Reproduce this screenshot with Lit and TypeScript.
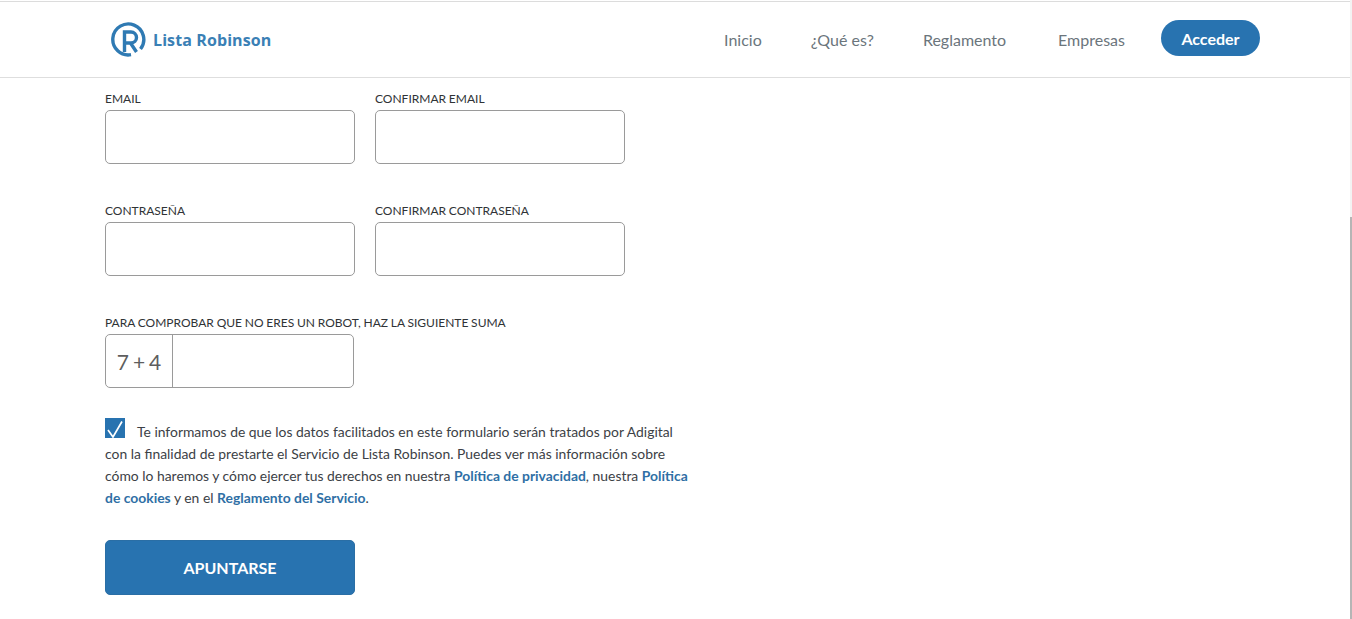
import { LitElement, html, css } from "lit";
import { customElement } from "lit/decorators.js";

@customElement("app-root")
export class AppRoot extends LitElement {
  static styles = css`
    :host { display: block; position: relative; width: 1352px; height: 619px; overflow: hidden; background: #fff; font-family: Lato, "Liberation Sans", sans-serif; color: #333; }
    * { box-sizing: border-box; }
    .header { height: 77px; margin-top: 1px; border-top: 1px solid #dcdcdc; border-bottom: 1px solid #dedede; display: flex; align-items: center; padding: 0 92px 0 111px; }
    .logo { display: flex; align-items: center; gap: 6px; }
    .logo svg { display: block; }
    .logo span { font-family: "Open Sans", sans-serif; font-weight: 700; font-size: 16px; letter-spacing: 0.1px; color: #3a80b5; }
    nav { margin-left: auto; display: flex; align-items: center; }
    nav a { font-size: 16px; color: #6b757c; }
    .n1 { margin-right: 49px; }
    .n2 { margin-right: 49px; }
    .n3 { margin-right: 52px; }
    .n4 { margin-right: 36px; }
    .btn { width: 99px; height: 36px; border-radius: 18px; background: #2873b0; color: #fff; font-weight: 700; font-size: 16px; display: flex; align-items: center; justify-content: center; margin-top: -3px; }
    main { padding: 13px 0 0 105px; }
    .row { display: flex; gap: 20px; margin-bottom: 39px; }
    .field { width: 250px; }
    label { display: block; font-size: 12px; line-height: 16px; height: 19px; color: #2f3336; word-spacing: -0.3px; }
    .box { width: 250px; height: 54px; border: 1px solid #9a9a9a; border-radius: 5px; background: #fff; }
    .captcha { display: flex; width: 249px; margin-bottom: 33px; }
    .sum { width: 67px; border-right: 1px solid #9a9a9a; display: flex; align-items: center; justify-content: center; font-size: 21px; word-spacing: -1.5px; color: #5e5e5e; }
    .legal { width: 588px; font-size: 13.9px; line-height: 22px; color: #3c4146; margin-bottom: 31px; }
    .check { display: inline-block; width: 20px; height: 20px; margin-top: -6px; background: #2873b0; vertical-align: -1px; margin-right: 12px; }
    .check svg { display: block; }
    .legal b { color: #2f6fa5; font-weight: 700; }
    .submit { width: 250px; height: 55px; background: #2873b0; border: 1px solid #2a6ea5; border-radius: 5px; color: #fff; font-weight: 700; font-size: 16px; display: flex; align-items: center; justify-content: center; }
    .scroll { position: absolute; right: 0; top: 0; width: 2px; height: 619px; background: #f3f3f3; }
    .thumb { position: absolute; top: 217px; left: 0; width: 2px; height: 402px; background: #b5b5b5; }
  `;

  render() {
    return html`
      <div class="header">
        <div class="logo">
          <svg width="36" height="38" viewBox="0 0 36 38" fill="none">
            <path d="M29.5 28 A 15.5 15.5 0 1 0 20 33.7" stroke="#2f7ab3" stroke-width="3.4" fill="none"/>
            <path d="M13.5 31 V11 H20 A5.5 5.5 0 0 1 20 22 H13.5 M19.5 22 L25.5 31" stroke="#2f7ab3" stroke-width="3.4" fill="none"/>
          </svg>
          <span>Lista Robinson</span>
        </div>
        <nav>
          <a class="n1">Inicio</a>
          <a class="n2">¿Qué es?</a>
          <a class="n3">Reglamento</a>
          <a class="n4">Empresas</a>
          <div class="btn">Acceder</div>
        </nav>
      </div>
      <main>
        <div class="row">
          <div class="field"><label>EMAIL</label><div class="box"></div></div>
          <div class="field"><label>CONFIRMAR EMAIL</label><div class="box"></div></div>
        </div>
        <div class="row">
          <div class="field"><label>CONTRASEÑA</label><div class="box"></div></div>
          <div class="field"><label>CONFIRMAR CONTRASEÑA</label><div class="box"></div></div>
        </div>
        <label>PARA COMPROBAR QUE NO ERES UN ROBOT, HAZ LA SIGUIENTE SUMA</label>
        <div class="box captcha"><div class="sum">7 + 4</div></div>
        <div class="legal"><span class="check"><svg width="20" height="20" viewBox="0 0 20 20" fill="none"><path d="M3 12 L8 19 L17 3.5" stroke="#fff" stroke-width="1.7"/></svg></span>Te informamos de que los datos facilitados en este formulario serán tratados por Adigital con la finalidad de prestarte el Servicio de Lista Robinson. Puedes ver más información sobre cómo lo haremos y cómo ejercer tus derechos en nuestra <b>Política de privacidad</b>, nuestra <b>Política de cookies</b> y en el <b>Reglamento del Servicio</b>.</div>
        <div class="submit">APUNTARSE</div>
      </main>
      <div class="scroll"><div class="thumb"></div></div>
    `;
  }
}
